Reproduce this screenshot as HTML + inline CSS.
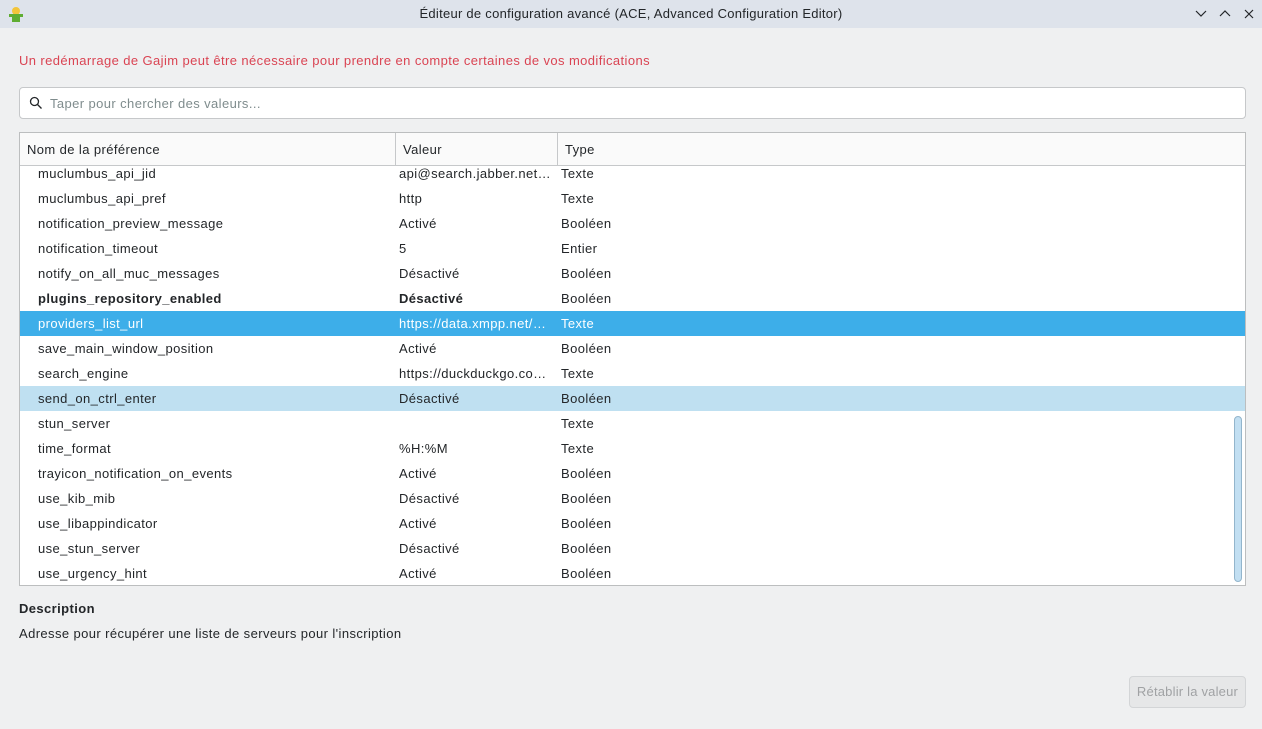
<!DOCTYPE html>
<html><head><meta charset="utf-8"><style>
*{margin:0;padding:0;box-sizing:border-box}
body{width:1262px;height:729px;background:#eff0f1;font-family:"Liberation Sans",sans-serif;font-size:13px;letter-spacing:0.4px;color:#232629;position:relative;overflow:hidden}
.title{position:absolute;left:0;top:0;width:1262px;height:28px;background:#dee3eb;text-align:center;line-height:28px;font-size:13px;letter-spacing:0.27px;color:#232629}
.warn{position:absolute;left:19px;top:53px;color:#da4453;font-size:13px}
.search{position:absolute;left:19px;top:87px;width:1227px;height:32px;background:#fff;border:1px solid #c6c8ca;border-radius:4px}
.search span{position:absolute;left:30px;top:8px;color:#7f8c8d}
.tbl{position:absolute;left:19px;top:132px;width:1227px;height:454px;background:#fff;border:1px solid #bcbebf;overflow:hidden}
.hdr{position:absolute;left:0;top:0;width:100%;height:33px;background:#fafafa;border-bottom:1px solid #c6c8ca;z-index:2}
.hdr div{position:absolute;top:9px}
.vl{position:absolute;top:0;height:33px;width:1px;background:#c6c8ca}
.row{position:absolute;left:0;width:100%;height:25px;line-height:25px}
.row span{position:absolute;top:0}
.c1{left:18px}.c2{left:379px}.c3{left:541px}
.sel{background:#3daee9;color:#fff}
.hov{background:#bfe0f1}
.b{font-weight:bold}
.sb{position:absolute;left:1214px;top:283px;width:8px;height:166px;background:#c2dff2;border:1px solid #93b5cc;border-radius:4px}
.desc{position:absolute;left:19px;top:601px;font-weight:bold;font-size:13px}
.dtxt{position:absolute;left:19px;top:626px}
.btn{position:absolute;left:1129px;top:676px;width:117px;height:32px;border:1px solid #d3d5d7;border-radius:4px;background:#e6e7e8;color:#a0a2a4;text-align:center;line-height:30px;letter-spacing:0.2px}
</style></head><body>
<div class="title">Éditeur de configuration avancé (ACE, Advanced Configuration Editor)
<svg style="position:absolute;left:6px;top:4px" width="20" height="20"><ellipse cx="10" cy="7" rx="4" ry="4" fill="#f3c53a"/><path d="M3 10h14v3h-3v5H6v-5H3z" fill="#5fad32"/></svg>
<svg style="position:absolute;left:1190px;top:6px" width="70" height="16" stroke="#232629" stroke-width="1.2" fill="none"><path d="M6 5l5 5 5-5"/><path d="M30 10l5-5 5 5"/><path d="M55 4l8 8M63 4l-8 8"/></svg>
</div>
<div class="warn">Un redémarrage de Gajim peut être nécessaire pour prendre en compte certaines de vos modifications</div>
<div class="search"><svg style="position:absolute;left:9px;top:8px" width="14" height="14" stroke="#232629" stroke-width="1.3" fill="none"><circle cx="5.5" cy="5.5" r="4"/><path d="M8.5 8.5l4 4"/></svg><span>Taper pour chercher des valeurs...</span></div>
<div class="tbl">
<div class="hdr"><div style="left:7px">Nom de la préférence</div><div style="left:383px">Valeur</div><div style="left:545px">Type</div><span class="vl" style="left:375px"></span><span class="vl" style="left:537px"></span></div>
<div class="row" style="top:28px"><span class="c1">muclumbus_api_jid</span><span class="c2">api@search.jabber.net…</span><span class="c3">Texte</span></div>
<div class="row" style="top:53px"><span class="c1">muclumbus_api_pref</span><span class="c2">http</span><span class="c3">Texte</span></div>
<div class="row" style="top:78px"><span class="c1">notification_preview_message</span><span class="c2">Activé</span><span class="c3">Booléen</span></div>
<div class="row" style="top:103px"><span class="c1">notification_timeout</span><span class="c2">5</span><span class="c3">Entier</span></div>
<div class="row" style="top:128px"><span class="c1">notify_on_all_muc_messages</span><span class="c2">Désactivé</span><span class="c3">Booléen</span></div>
<div class="row b" style="top:153px"><span class="c1">plugins_repository_enabled</span><span class="c2">Désactivé</span><span class="c3" style="font-weight:normal">Booléen</span></div>
<div class="row sel" style="top:178px"><span class="c1">providers_list_url</span><span class="c2">https://data.xmpp.net/…</span><span class="c3">Texte</span></div>
<div class="row" style="top:203px"><span class="c1">save_main_window_position</span><span class="c2">Activé</span><span class="c3">Booléen</span></div>
<div class="row" style="top:228px"><span class="c1">search_engine</span><span class="c2">https://duckduckgo.co…</span><span class="c3">Texte</span></div>
<div class="row hov" style="top:253px"><span class="c1">send_on_ctrl_enter</span><span class="c2">Désactivé</span><span class="c3">Booléen</span></div>
<div class="row" style="top:278px"><span class="c1">stun_server</span><span class="c2"></span><span class="c3">Texte</span></div>
<div class="row" style="top:303px"><span class="c1">time_format</span><span class="c2">%H:%M</span><span class="c3">Texte</span></div>
<div class="row" style="top:328px"><span class="c1">trayicon_notification_on_events</span><span class="c2">Activé</span><span class="c3">Booléen</span></div>
<div class="row" style="top:353px"><span class="c1">use_kib_mib</span><span class="c2">Désactivé</span><span class="c3">Booléen</span></div>
<div class="row" style="top:378px"><span class="c1">use_libappindicator</span><span class="c2">Activé</span><span class="c3">Booléen</span></div>
<div class="row" style="top:403px"><span class="c1">use_stun_server</span><span class="c2">Désactivé</span><span class="c3">Booléen</span></div>
<div class="row" style="top:428px"><span class="c1">use_urgency_hint</span><span class="c2">Activé</span><span class="c3">Booléen</span></div>
<div class="sb"></div>
</div>
<div class="desc">Description</div>
<div class="dtxt">Adresse pour récupérer une liste de serveurs pour l'inscription</div>
<div class="btn">Rétablir la valeur</div>
</body></html>
